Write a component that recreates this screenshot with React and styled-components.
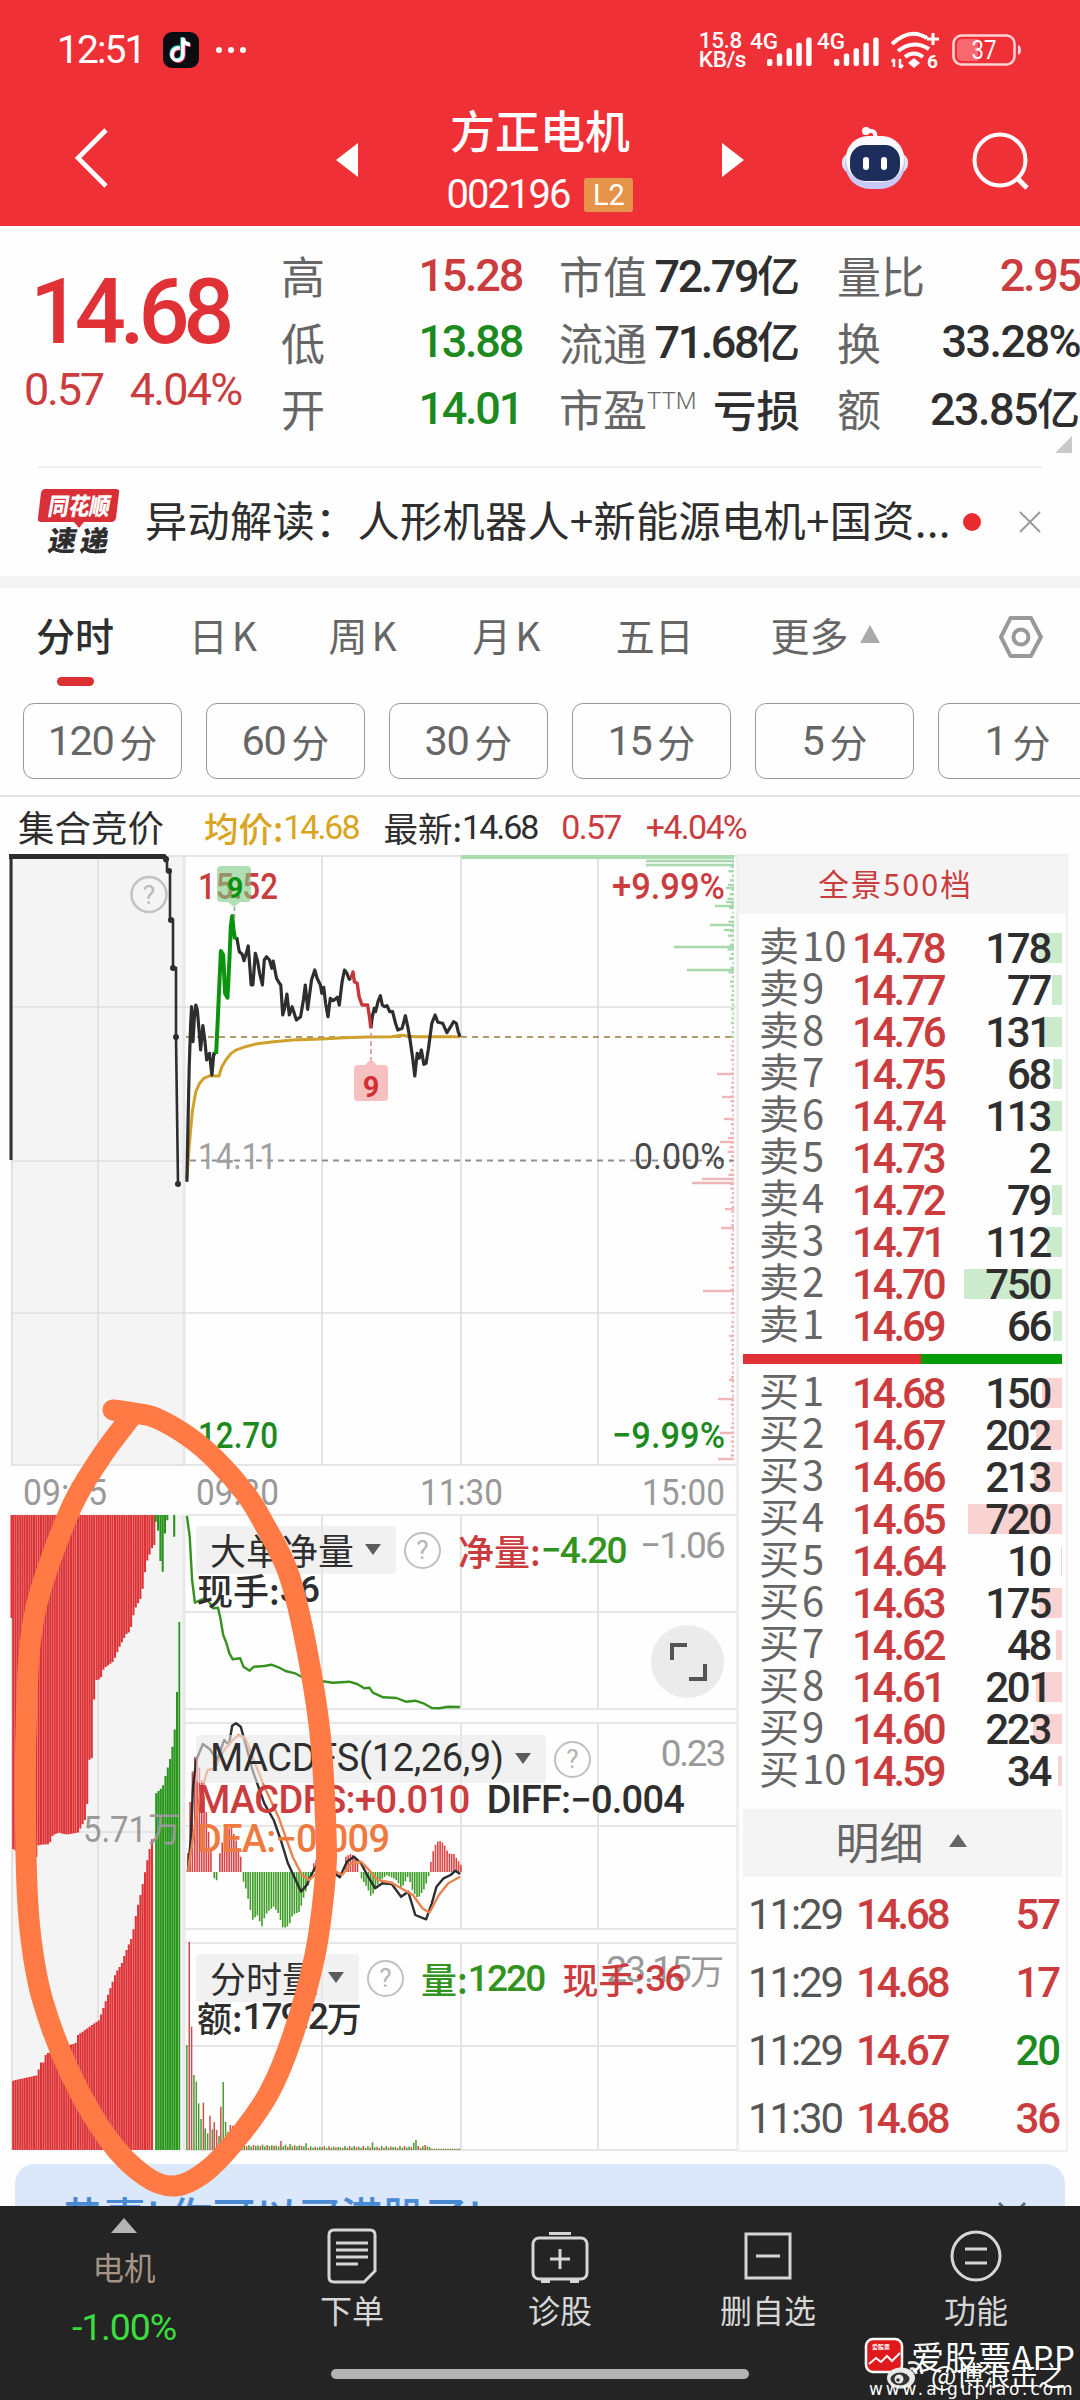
import React from "react";
import styled, { createGlobalStyle, css } from "styled-components";

const RED = "#e03236";
const RED2 = "#cb3c3f";
const GREEN = "#0b930f";
const INK = "#2e2e2e";
const GREY = "#666";
const MUTE = "#999";
const CJK = `"Noto Sans CJK SC", sans-serif`;
const NUM = `Roboto, "Noto Sans CJK SC", sans-serif`;

const Global = createGlobalStyle`
  body { margin: 0; background: #fff; }
  * { box-sizing: border-box; }
`;

const Screen = styled.div`
  width: 1080px;
  height: 2400px;
  overflow: hidden;
  position: relative;
  display: flex;
  flex-direction: column;
  background: #fefefe;
  font-family: ${CJK};
  color: ${INK};
  white-space: nowrap;
`;

const Num = styled.span`
  font-family: ${NUM};
  font-size: ${(p) => p.$s || 42}px;
  font-weight: ${(p) => p.$w || 400};
  letter-spacing: ${(p) => (p.$ls === undefined ? -0.05 : p.$ls)}em;
  color: ${(p) => p.$c || "inherit"};
  line-height: 1;
`;
const Han = styled.span`
  font-family: ${CJK};
  font-size: ${(p) => p.$s || 42}px;
  font-weight: ${(p) => p.$w || 400};
  color: ${(p) => p.$c || "inherit"};
  letter-spacing: ${(p) => p.$ls || 0}px;
  line-height: 1;
`;

/* ---------- top bar ---------- */
const Top = styled.header`
  height: 226px;
  background: #f03037;
  color: #fff;
  flex: none;
`;
const Status = styled.div`
  height: 100px;
  padding: 0 58px 0 57px;
  display: flex;
  align-items: center;
  justify-content: space-between;
`;
const StatusSide = styled.div`
  display: flex;
  align-items: center;
  gap: ${(p) => p.$gap}px;
`;
const Speed = styled.div`
  display: flex;
  flex-direction: column;
  font: 500 22.5px/19.5px ${NUM};
  letter-spacing: -0.4px;
`;
const TitleBar = styled.div`
  height: 126px;
  display: grid;
  grid-template-columns: 336px 22px 364px 22px 97px 70px 1fr;
  align-items: center;
  padding-bottom: 6px;
`;
const Back = styled.div`
  padding-left: 74px;
`;
const Names = styled.div`
  display: flex;
  flex-direction: column;
  align-items: center;
  gap: 26px;
  padding-bottom: 2px;
`;
const Code = styled.div`
  display: flex;
  align-items: center;
  gap: 15px;
  height: 34px;
`;
const Level = styled.span`
  width: 49px;
  height: 34px;
  background: #e6944a;
  border-radius: 3px;
  display: grid;
  place-items: center;
  font: 400 29px/34px ${NUM};
`;

/* ---------- quote ---------- */
const Quote = styled.section`
  height: 240px;
  flex: none;
  display: grid;
  grid-template-columns: 281px 241px 37px 241px 37px 243px;
`;
const Last = styled.div`
  padding: 42px 0 0 30px;
  display: flex;
  flex-direction: column;
  gap: 9px;
  color: ${RED};
`;
const Change = styled.div`
  display: flex;
  gap: 27px;
  margin-left: -6px;
  color: ${RED2};
`;
const Facts = styled.div`
  padding-top: 16px;
  display: flex;
  flex-direction: column;
  grid-column: ${(p) => p.$col};
`;
const Fact = styled.div`
  height: 66.5px;
  display: flex;
  align-items: center;
  justify-content: space-between;
`;
const FactName = styled.span`
  font-size: 44px;
  line-height: 1;
  color: ${GREY};
  display: flex;
  small { font: 300 24px/24px ${NUM}; margin-top: 3px; }
`;
const Corner = styled.i`
  width: 0;
  height: 0;
  align-self: flex-end;
  margin: -6px 8px 0 0;
  border-left: 17px solid transparent;
  border-bottom: 17px solid #c9c9c9;
`;

const News = styled.section`
  height: 110px;
  flex: none;
  margin: 0 38px;
  border-top: 2px solid #efefef;
  display: grid;
  grid-template-columns: 82px 25px 1fr auto auto;
  align-items: center;
`;
const NewsText = styled.div`
  grid-column: 3;
  font-size: 42.2px;
  line-height: 60px;
  letter-spacing: 0.3px;
  padding-bottom: 6px;
`;
const Dot = styled.i`
  width: 18px;
  height: 18px;
  border-radius: 50%;
  background: #ea2b2e;
  margin: 0 37px 0 0;
`;
const Band = styled.div`
  height: 12px;
  flex: none;
  background: #f4f4f4;
`;

/* ---------- period tabs ---------- */
const Tabs = styled.nav`
  height: 115px;
  flex: none;
  display: flex;
  padding: 22px 36px 0;
`;
const Tab = styled.div`
  width: ${(p) => p.$w}px;
  font-size: 39px;
  line-height: 44px;
  letter-spacing: ${(p) => p.$ls || 0}px;
  display: flex;
  align-items: center;
  height: 48px;
  color: ${(p) => (p.$on ? INK : GREY)};
  font-weight: ${(p) => (p.$on ? 500 : 400)};
  position: relative;
  ${(p) => p.$on && css`
    &::after {
      content: "";
      position: absolute;
      left: 21px;
      top: 67px;
      width: 37px;
      height: 9px;
      border-radius: 5px;
      background: #dd3033;
    }
  `}
`;
const Up = styled.i`
  border: ${(p) => p.$w / 2}px solid transparent;
  border-top: 0;
  border-bottom: ${(p) => p.$h}px solid ${(p) => p.$c};
  width: 0;
  height: 0;
  margin-left: ${(p) => p.$ml || 0}px;
`;
const Down = styled.i`
  border: 8px solid transparent;
  border-bottom: 0;
  border-top: 11px solid #5c5c5c;
  width: 0;
  height: 0;
`;
const Minutes = styled.div`
  height: 94px;
  flex: none;
  display: flex;
  gap: 24px;
  padding-left: 23px;
  border-bottom: 2px solid #e2e2e2;
`;
const Minute = styled.div`
  flex: none;
  width: 159px;
  height: 76px;
  border: 1.5px solid #999;
  border-radius: 11px;
  display: flex;
  align-items: center;
  justify-content: center;
  gap: 6px;
  color: ${GREY};
`;
const Legend = styled.div`
  height: 57px;
  flex: none;
  display: flex;
  align-items: center;
  padding: 3px 0 0 18px;
`;
const Item = styled.span`
  display: flex;
  align-items: center;
  margin-left: ${(p) => p.$ml || 0}px;
  color: ${(p) => p.$c || "inherit"};
`;

/* ---------- body: charts + book ---------- */
const Body = styled.main`
  height: 1298px;
  flex: none;
  display: grid;
  grid-template-columns: 738px 330px;
`;
const Charts = styled.section`
  position: relative;
  height: 1298px;
`;
const Canvas = styled.svg`
  position: absolute;
  left: 0;
  top: 0;
`;
const Pane = styled.div`
  position: absolute;
  left: 196px;
  top: ${(p) => p.$top}px;
  width: 542px;
`;
const PaneHead = styled.div`
  height: 48px;
  display: flex;
  align-items: center;
`;
const Picker = styled.div`
  height: 48px;
  width: ${(p) => p.$w}px;
  padding: 0 15px 2px 14px;
  display: flex;
  align-items: center;
  justify-content: space-between;
  background: rgba(232, 232, 232, 0.6);
  border-radius: 4px;
`;
const Help = styled.span`
  flex: none;
  width: 37px;
  height: 37px;
  margin: 0 0 0 8px;
  border: 2.5px solid #c0c0c0;
  border-radius: 50%;
  display: grid;
  place-items: center;
  font: 400 26px/32px ${NUM};
  color: #b5b5b5;
`;
const PaneLine = styled.div`
  display: flex;
  align-items: center;
  height: ${(p) => p.$h || 30}px;
  padding-left: ${(p) => p.$pl || 1}px;
`;
const Scale = styled.div`
  position: absolute;
  right: 14px;
  top: ${(p) => p.$top}px;
  display: flex;
  align-items: center;
  color: ${MUTE};
`;
const Expand = styled.div`
  position: absolute;
  left: 651px;
  top: 771px;
  width: 73px;
  height: 73px;
  border-radius: 50%;
  background: #ebebeb;
  display: grid;
  place-items: center;
`;

const Book = styled.aside`
  height: 1298px;
  border: 2px solid #f0f0f0;
  border-left: 1px solid #eee;
  display: flex;
  flex-direction: column;
`;
const BookHead = styled.div`
  height: 58px;
  flex: none;
  background: #f4f4f4;
  color: ${RED2};
  display: flex;
  align-items: center;
  justify-content: center;
  font-size: 30.5px;
  letter-spacing: 2px;
  padding: 0 14px 4px 0;
`;
const Levels = styled.div`
  padding-top: ${(p) => p.$pt}px;
  flex: none;
`;
const LevelRow = styled.div`
  height: 42px;
  display: grid;
  grid-template-columns: 93px 1fr;
  padding: 0 4px 0 20px;
  align-items: center;
`;
const Side = styled.div`
  color: ${GREY};
  font-size: 40px;
  line-height: 42px;
  display: flex;
  gap: 3px;
  position: relative;
  top: -4px;
`;
const Cells = styled.div`
  display: flex;
  justify-content: space-between;
  align-items: center;
  height: 30px;
  padding: 2px 12px 0 0;
  background: linear-gradient(${(p) => p.$bar}, ${(p) => p.$bar}) right center / ${(p) => p.$len}px 30px no-repeat;
`;
const Ratio = styled.div`
  height: 10px;
  flex: none;
  margin: 7px 4px 7px 4px;
  display: grid;
  grid-template-columns: 178px 1fr;
  background: #049a08;
  &::before { content: ""; background: ${RED}; }
`;
const DetailHead = styled.div`
  height: 68px;
  flex: none;
  margin: 17px 4px 4px;
  background: #f4f4f4;
  color: ${GREY};
  display: flex;
  align-items: center;
  justify-content: center;
  gap: 25px;
  font-size: 44px;
  line-height: 60px;
  padding: 0 3px 5px 0;
`;
const Trade = styled.div`
  height: 68px;
  flex: none;
  display: grid;
  grid-template-columns: 108px 95px 1fr;
  align-items: center;
  padding: 0 7px 0 9px;
  & > :last-child { text-align: right; }
`;

/* ---------- bottom ---------- */
const Banner = styled.section`
  flex: none;
  height: 42px;
  margin: 12px 15px 0;
  background: #dae8fa;
  border-radius: 20px 20px 0 0;
  overflow: hidden;
  display: flex;
  justify-content: space-between;
  padding: 23px 38px 0 46px;
  color: #4a8ad4;
  font-weight: 500;
  font-size: 42.5px;
  line-height: 56px;
`;
const Dock = styled.footer`
  flex: 1;
  background: #242424;
  color: #d6d6d6;
  display: grid;
  grid-template-columns: 248px 208px 208px 208px 208px;
  grid-template-rows: 145px 1fr;
`;
const Sector = styled.div`
  display: flex;
  flex-direction: column;
  align-items: center;
  padding: 12px 0 0 0;
`;
const Action = styled.div`
  display: flex;
  flex-direction: column;
  align-items: center;
  padding-top: 20px;
  gap: 7px;
`;
const HomeBar = styled.div`
  grid-column: 1 / 6;
  justify-self: center;
  width: 418px;
  height: 10px;
  margin-top: 18px;
  border-radius: 5px;
  background: #b3b3b3;
`;
const Mark = styled.div`
  position: absolute;
  left: 864px;
  top: 2337px;
  width: 216px;
  height: 63px;
  color: #fff;
`;
const MarkLine = styled.div`
  position: absolute;
  left: ${(p) => p.$x}px;
  top: ${(p) => p.$y}px;
  font: ${(p) => p.$f};
  letter-spacing: ${(p) => p.$ls || 0}px;
`;
const Scribble = styled.svg`
  position: absolute;
  left: 0;
  top: 1380px;
  pointer-events: none;
`;

/* ---------- chart data ---------- */
const TOP = 854;
const KX = 2.119;
// Chart samples are stored on a 2.119 x 3 finer raster; yo is the raster's first line.
const toXY = (yo) => ([x, y]) => [x / KX, y / 3 + yo - TOP];
const line = (pts, yo) =>
  pts.map(toXY(yo)).map(([x, y], i) => `${i ? "L" : "M"}${x.toFixed(1)} ${y.toFixed(1)}`).join("");
const at = (pts, x) => {
  for (let i = 1; i < pts.length; i++) {
    const [a, b] = [pts[i - 1], pts[i]];
    if (x <= b[0]) return a[1] + ((b[1] - a[1]) * (x - a[0])) / (b[0] - a[0] || 1);
  }
  return pts[pts.length - 1][1];
};
const bars = (pts, step, yo, base) => {
  const out = [];
  for (let x = pts[0][0]; x <= pts[pts.length - 1][0]; x += step) {
    const y = at(pts, x) / 3 + yo - TOP;
    out.push(`M${(x / KX).toFixed(1)} ${base}V${y.toFixed(1)}`);
  }
  return out.join("");
};
const smooth = (p) => {
  let d = `M${p[0][0]} ${p[0][1]}`;
  for (let i = 0; i < p.length - 1; i++) {
    const a = p[Math.max(0, i - 1)], b = p[i], c = p[i + 1], e = p[Math.min(p.length - 1, i + 2)];
    d += `C${b[0] + (c[0] - a[0]) / 6} ${b[1] + (c[1] - a[1]) / 6} ${c[0] - (e[0] - b[0]) / 6} ${c[1] - (e[1] - b[1]) / 6} ${c[0]} ${c[1]}`;
  }
  return d;
};

const P1 = [[396, 995], [398, 850], [401, 650], [404, 520], [406, 470], [409, 575], [412, 500], [415, 465], [418, 480], [423, 560], [425, 600], [430, 527], [434, 570], [438, 630], [444, 610], [449, 675], [453, 610], [458, 612]];
const PG = [[458, 612], [461, 520], [465, 400], [468, 303], [473, 315], [477, 430], [482, 443], [486, 330], [489, 230], [492, 198], [495, 240], [498, 268]];
const P2 = [[498, 268], [502, 265], [507, 305], [513, 312], [517, 332], [522, 310], [526, 288], [530, 360], [532, 405], [536, 405], [541, 310], [546, 335], [550, 370], [556, 405], [560, 330], [565, 320], [571, 330], [576, 355], [579, 333], [586, 385], [592, 400], [595, 405], [599, 495], [603, 475], [608, 432], [613, 495], [619, 470], [628, 510], [637, 500], [643, 450], [647, 405], [652, 478], [660, 390], [667, 360], [672, 385], [679, 405], [682, 430], [686, 412], [690, 460], [695, 500], [700, 445], [706, 452], [715, 442], [719, 465], [725, 395], [730, 360], [735, 370], [740, 388], [744, 385]];
const PR = [[744, 385], [748, 366], [751, 395], [757, 400], [761, 440], [767, 465], [779, 465], [783, 500], [786, 535]];
const P3 = [[786, 535], [789, 500], [793, 475], [796, 485], [801, 455], [806, 437], [810, 465], [815, 470], [820, 467], [826, 485], [832, 485], [838, 520], [843, 540], [852, 535], [859, 497], [864, 530], [868, 560], [874, 620], [879, 678], [884, 610], [888, 625], [893, 600], [898, 643], [903, 640], [908, 595], [915, 520], [922, 495], [928, 517], [938, 520], [947, 548], [955, 530], [961, 515], [967, 520], [971, 545], [975, 560]];
const AVG = [[396, 985], [402, 870], [408, 780], [415, 725], [423, 700], [432, 685], [445, 677], [464, 678], [470, 650], [480, 627], [490, 610], [500, 600], [520, 590], [545, 581], [580, 575], [620, 570], [680, 567], [730, 563], [780, 561], [830, 560], [850, 556], [880, 560], [975, 560]];
const NET = [[396, 48], [402, 110], [407, 240], [413, 308], [425, 300], [435, 295], [445, 310], [452, 325], [462, 323], [467, 355], [473, 405], [480, 430], [486, 460], [493, 478], [509, 475], [516, 500], [529, 512], [538, 500], [560, 498], [575, 494], [590, 502], [605, 513], [625, 520], [645, 535], [680, 543], [705, 548], [740, 545], [757, 552], [772, 565], [783, 563], [790, 578], [812, 592], [840, 594], [860, 605], [880, 602], [897, 610], [915, 624], [930, 625], [950, 620], [975, 621]];
const DIFF = [[398, 155], [404, 60], [409, -100], [416, -180], [430, -228], [445, -212], [460, -180], [475, -240], [485, -225], [492, -283], [500, -290], [510, -280], [520, -230], [535, -150], [545, -110], [560, -50], [580, 0], [595, 60], [610, 130], [638, 215], [650, 195], [665, 150], [680, 120], [700, 150], [720, 172], [735, 125], [750, 110], [765, 130], [780, 170], [795, 205], [810, 190], [830, 192], [850, 230], [865, 215], [880, 285], [903, 298], [915, 250], [925, 200], [940, 175], [955, 165], [965, 152], [975, 162]];
const DEA = [[398, 155], [415, 0], [425, -80], [440, -150], [455, -155], [475, -210], [490, -235], [505, -255], [520, -245], [535, -190], [560, -100], [590, -10], [620, 110], [640, 165], [655, 180], [675, 155], [700, 145], [725, 165], [745, 130], [765, 125], [785, 155], [800, 180], [830, 188], [850, 205], [875, 225], [895, 265], [910, 278], [930, 225], [950, 190], [975, 170]];
const HIST_R = [
  [[398, 100], [405, -120], [415, -210], [425, -140], [435, -50], [445, 70], [451, 140]],
  [[466, 100], [475, 40], [490, 20], [500, 60], [511, 115]],
  [[665, 130], [680, 100], [700, 130], [712, 150]],
  [[733, 110], [745, 100], [755, 120], [762, 148]],
  [[913, 125], [920, 80], [930, 60], [940, 70], [950, 100], [962, 102], [970, 120], [977, 135]],
];
const HIST_G = [
  [[454, 175], [460, 182]],
  [[516, 185], [522, 210], [535, 300], [545, 285], [555, 320], [562, 285], [570, 272], [580, 260], [590, 280], [600, 325], [612, 318], [620, 285], [635, 275], [645, 225], [655, 190], [661, 165]],
  [[766, 175], [777, 200], [787, 232], [797, 200], [807, 180], [820, 165], [840, 180], [851, 205], [865, 168], [875, 215], [886, 235], [900, 205], [910, 160]],
];
const DROP_R = [[28, 1048], [76, 1078], [82, 1035], [105, 1032], [112, 1005], [125, 998], [140, 1004], [165, 998], [180, 960], [186, 900], [189, 780], [198, 770], [200, 541], [213, 537], [220, 505], [240, 485], [255, 435], [268, 402], [276, 395], [285, 330], [300, 290], [310, 190], [322, 145], [327, 135]];
const DROP_G = [[330, 65], [334, 60], [336, 130], [341, 200], [343, 130], [347, 330], [350, 65], [355, 60], [358, 45], [366, 45], [369, 115], [372, 45], [380, 45]];
const RISE_R = [[28, 782], [50, 775], [81, 765], [83, 728], [95, 727], [97, 700], [128, 695], [131, 680], [160, 670], [165, 645], [190, 620], [210, 600], [220, 560], [235, 500], [245, 460], [258, 430], [265, 400], [280, 350], [290, 270], [300, 210], [315, 100], [325, 40]];
const RISE_G = [[331, -80], [345, -100], [352, -140], [360, -180], [368, -240], [374, -325], [379, -595]];
const VOL = [[396, 675, 1], [401, 365, 0], [406, 620, 0], [411, 765, 1], [416, 785, 1], [421, 850, 1], [426, 897, 1], [431, 848, 0], [435, 925, 1], [440, 940, 1], [445, 887, 0], [450, 928, 1], [454, 906, 0], [459, 930, 0], [464, 948, 1], [468, 860, 0], [473, 786, 1], [478, 905, 1], [483, 935, 1], [488, 915, 0], [493, 917, 0], [498, 935, 0], [503, 962, 0]];
const TAIL = "6354738564938475637492837465392837465928374652938475629384756293847562938475629384756";
for (let i = 0; i < 97; i++) {
  const x = 508 + i * 4.85;
  const spike = { 18: 27, 22: 18, 29: 20, 50: 12, 58: 23, 72: 12, 76: 22, 77: 30, 81: 15 }[i];
  const h = spike || (i < 30 ? 8 : 4) + Number(TAIL[i % TAIL.length]) * (i > 83 ? 0 : 0.9);
  VOL.push([x, 990 - h, (i * 7) % 3 === 0 ? 0 : 1]);
}
const DEPTH = [];
for (let i = 0; i < 130; i++) {
  const y = 862 + i * 4.6;
  const lean = y < 985 || (y > 1130 && y < 1185) ? 5 : 2;
  DEPTH.push([734 - 1.5 - (((i * 37) % 11) / 10) * lean, y]);
}
const DEPTH_BIG = [[646, 861], [646, 865], [715, 906], [710, 925], [674, 947], [687, 970], [724, 930], [726, 902], [726, 888], [717, 1074], [722, 1097], [724, 1119], [720, 1142], [702, 1179], [692, 1183], [725, 1209], [721, 1228], [703, 1291], [729, 1268], [718, 1399], [720, 1433], [718, 1459], [729, 1380], [729, 1336]];

const LASSO = [[113, 1410], [134, 1413], [156, 1418], [189, 1437], [217, 1461], [245, 1493], [262, 1520], [288, 1572], [305, 1640], [320, 1733], [326, 1833], [325, 1880], [315, 1955], [293, 2035], [269, 2093], [236, 2140], [205, 2172], [175, 2186], [145, 2176], [109, 2140], [71, 2075], [42, 1998], [30, 1930], [26, 1853], [26, 1733], [34, 1617], [68, 1515], [99, 1460], [130, 1418]];

const Grid = () => {
  const v = [322, 461, 598];
  const panes = [[1515, 1612, 1709], [1723, 1826, 1929], [1943, 2046, 2150]];
  return (
    <g stroke="#dedede" strokeWidth="1.6" fill="none">
      <rect x="11" y="2" width="173" height="1294" fill="#f4f4f4" stroke="none" />
      <rect x="10" y={1466 - TOP} width="177" height="48" fill="#fefefe" stroke="none" />
      <path d={`M12 2V${1465 - TOP}M98 2V${1465 - TOP}M12 ${1515 - TOP}V1296M98 ${1515 - TOP}V1296M12 ${1832 - TOP}H184`} />
      <path d={`M184 2V${1465 - TOP}M184 ${1515 - TOP}V1296`} strokeWidth="3" stroke="#e8e8e8" />
      <path d={`M11 2H738M11 153H738M11 307H184M11 459H738M11 611H738`} />
      {v.map((x) => (
        <path key={x} d={`M${x} 2V611` + panes.map(([a, , c]) => `M${x} ${a - TOP}V${c - TOP}`).join("")} />
      ))}
      <path d={panes.flat().map((y) => `M185 ${y - TOP}H738`).join("")} strokeWidth="2" stroke="#e6e6e6" />
      <path d="M737 2V1296" stroke="#ececec" />
    </g>
  );
};

const Label = ({ x, y, w, c, s = 37, children, b }) => (
  <text x={x} y={y - TOP} textLength={w} lengthAdjust="spacingAndGlyphs" fill={c} fontSize={s} fontWeight={b || 400} fontFamily="Roboto, 'Noto Sans CJK SC', sans-serif">
    {children}
  </text>
);

const Plot = () => (
  <Canvas width="738" height="1298" fill="none">
    <Grid />
    {/* order depth along the right edge */}
    <path d="M461 3H734" stroke="#a9dcae" strokeWidth="4" />
    <g strokeWidth="2.4">
      {[...DEPTH, ...DEPTH_BIG].map(([x, y], i) => (
        <path key={i} d={`M${x} ${y - TOP}H734`} stroke={y < 1037 ? "#a9d8ad" : "#efb5b7"} />
      ))}
    </g>
    <path d={`M186 ${1037 - TOP}H734`} stroke="#b09a6c" strokeWidth="1.8" strokeDasharray="6 5" />
    <path d={`M190 ${1160.5 - TOP}H734`} stroke="#8f8f8f" strokeWidth="2" strokeDasharray="6 5" />
    {/* call auction */}
    <path d="M11 2V306" stroke={INK} strokeWidth="3" />
    <path d="M9 2.5H164l3 5" stroke={INK} strokeWidth="5" />
    <path d="M167 6V17H170V66H173V114H176V183L178 330" stroke={INK} strokeWidth="2.6" />
    <g fill={INK}>
      {[[166, 5], [169, 17], [171, 66], [173, 114], [176, 183], [178, 330]].map(([x, y]) => (
        <circle key={y} cx={x} cy={y} r="3" />
      ))}
    </g>
    <circle cx="149" cy={894.5 - TOP} r="17.5" stroke="#c2c2c2" strokeWidth="2.5" />
    <text x="149" y={904 - TOP} textAnchor="middle" fontSize="26" fill="#bababa" fontFamily="Roboto">?</text>
    {/* intraday price */}
    <Label x="634" y={1169} w="91" c="#4a4a4a">0.00%</Label>
    <Label x="198" y={1169} w="79" c="#a0a0a0">14.11</Label>
    <path d={line(AVG, 850)} stroke="#cfa12c" strokeWidth="3" />
    <g strokeWidth="3.2" strokeLinejoin="round">
      <path d={line(P1, 850)} stroke={INK} />
      <path d={line(P2, 850)} stroke={INK} />
      <path d={line(P3, 850)} stroke={INK} />
      <path d={line(PR, 850)} stroke="#c9363a" strokeWidth="3.4" />
      <path d={line(PG, 850)} stroke={GREEN} strokeWidth="4" />
    </g>
    <Label x="198" y={899} w="80" c={RED2} b="500">15.52</Label>
    <path d="M221 12h26q4 0 4 4v28q0 4-4 4h-7l-6 5-6-5h-7q-4 0-4-4V16q0-4 4-4z" fill="#79c981" fillOpacity=".6" />
    <text x="235" y={898 - TOP} textAnchor="middle" fontSize="29" fontWeight="700" fill={GREEN} fontFamily="Roboto">9</text>
    <path d="M234.500 53V64" stroke="#8aa88c" strokeWidth="1.5" strokeDasharray="4 3" />
    <path d="M371 179V206" stroke="#d98f92" strokeWidth="1.6" strokeDasharray="5 3" />
    <path d="M358 211h7l6-6 6 6h7q4 0 4 4v28q0 4-4 4h-26q-4 0-4-4v-28q0-4 4-4z" fill="#f6bfc0" />
    <text x="371" y={1097 - TOP} textAnchor="middle" fontSize="29" fontWeight="700" fill="#d02f33" fontFamily="Roboto">9</text>
    <Label x="612" y={899} w="113" c={RED2} b="500">+9.99%</Label>
    <Label x="198" y={1448} w="80" c="#1c8a1e" b="500">12.70</Label>
    <Label x="612" y={1448} w="113" c="#1c8a1e" b="500">−9.99%</Label>
    <Label x="23" y={1505} w="84" c={MUTE}>09:15</Label>
    <Label x="196" y={1505} w="83" c={MUTE}>09:30</Label>
    <Label x="420" y={1505} w="83" c={MUTE}>11:30</Label>
    <Label x="642" y={1505} w="83" c={MUTE}>15:00</Label>
    {/* auction volumes */}
    <path d={`M11.500 ${1515 - TOP}V${1618 - TOP}`} stroke={RED} strokeWidth="2" />
    <g strokeWidth="2.050">
      <path d={bars(DROP_R, 4.9, 1500, 1515 - TOP)} stroke="#de3336" />
      <path d={bars(DROP_G, 4.9, 1500, 1515 - TOP)} stroke="#27921c" />
      <path d={bars(RISE_R, 4.9, 1820, 1296)} stroke="#de3336" />
      <path d={bars(RISE_G, 4.9, 1820, 1296)} stroke="#27961a" />
    </g>
    <path d={`M179.300 ${1622 - TOP}V1296`} stroke="#27961a" strokeWidth="1.8" />
    <Label x="83" y={1842} w="64" c={MUTE}>5.71</Label>
    <Label x="148" y={1842} w="33" c={MUTE} s="35">万</Label>
    {/* net large orders */}
    <path d={line(NET, 1500)} stroke="#35921f" strokeWidth="2.4" strokeLinejoin="round" />
    {/* MACD */}
    <g strokeWidth="1.600">
      {HIST_R.map((p, i) => <path key={i} d={bars(p, 4.9, 1820, 1872 - TOP)} stroke="#db4446" />)}
      {HIST_G.map((p, i) => <path key={i} d={bars(p, 4.9, 1820, 1872 - TOP)} stroke="#3d9c26" />)}
    </g>
    <path d={line(DIFF, 1820)} stroke={INK} strokeWidth="2.4" strokeLinejoin="round" />
    <path d={line(DEA, 1820)} stroke="#e8834f" strokeWidth="2.4" strokeLinejoin="round" />
    {/* volume */}
    <g strokeWidth="1.500">
      {VOL.map(([x, y, up], i) => (
        <path key={i} d={`M${x / KX} 1296V${y / 3 + 1820 - TOP}`} stroke={up ? "#4c9a35" : "#cf4d4d"} />
      ))}
    </g>
  </Canvas>
);

const sells = [["10", "14.78", 178], ["9", "14.77", 77], ["8", "14.76", 131], ["7", "14.75", 68], ["6", "14.74", 113], ["5", "14.73", 2], ["4", "14.72", 79], ["3", "14.71", 112], ["2", "14.70", 750], ["1", "14.69", 66]];
const buys = [["1", "14.68", 150], ["2", "14.67", 202], ["3", "14.66", 213], ["4", "14.65", 720], ["5", "14.64", 10], ["6", "14.63", 175], ["7", "14.62", 48], ["8", "14.61", 201], ["9", "14.60", 223], ["10", "14.59", 34]];
const trades = [["11:29", "14.68", 57], ["11:29", "14.68", 17], ["11:29", "14.67", 20, 1], ["11:30", "14.68", 36]];

const Rows = ({ side, rows, bar, pt }) => (
  <Levels $pt={pt}>
    {rows.map(([n, price, qty]) => (
      <LevelRow key={n}>
        <Side><span>{side}</span><span>{n}</span></Side>
        <Cells $bar={bar} $len={qty < 5 ? 0 : Math.round((qty * 98) / 750)}>
          <Num $w={500} $ls={-0.075} $c={RED2}>{price}</Num>
          <Num $w={500} $ls={-0.055}>{qty}</Num>
        </Cells>
      </LevelRow>
    ))}
  </Levels>
);

const Signal = () => (
  <svg width="63" height="38" viewBox="0 0 63 38" fill="#fff">
    <text x="0" y="17.500" textLength="28" lengthAdjust="spacingAndGlyphs" fontSize="21.500" fontWeight="500" fontFamily="Roboto">4G</text>
    {[0, 1, 2, 3, 4].map((i) => (
      <rect key={i} x={17 + i * 9.8} y={28 - i * 5.4} width="5.400" height={7 + i * 5.4} rx="2" />
    ))}
  </svg>
);

export default function App() {
  return (
    <Screen>
      <Global />
      <Top>
        <Status>
          <StatusSide $gap={19}>
            <Num $s={39}>12:51</Num>
            <svg width="36" height="36" viewBox="0 0 36 36">
              <rect width="36" height="36" rx="9" fill="#0b0b12" />
              <g fill="none" strokeWidth="3.600">
                <path d="M17 16c-5-.5-8 2.500-8 6.500s3 6 5.500 6 5.500-2 5.500-6V6c.5 4 3 6.500 7 6.500" stroke="#25e6e0" transform="translate(-.8 -.8)" />
                <path d="M17 16c-5-.5-8 2.500-8 6.500s3 6 5.500 6 5.500-2 5.500-6V6c.5 4 3 6.500 7 6.500" stroke="#f0305a" transform="translate(.9 .8)" />
                <path d="M17 16c-5-.5-8 2.500-8 6.500s3 6 5.500 6 5.500-2 5.500-6V6c.5 4 3 6.500 7 6.500" stroke="#fff" />
              </g>
            </svg>
            <svg width="34" height="8" fill="#fff" style={{ marginLeft: -3 }}><circle cx="4" cy="4" r="3" /><circle cx="16" cy="4" r="3" /><circle cx="28" cy="4" r="3" /></svg>
          </StatusSide>
          <StatusSide $gap={4}>
            <Speed><span>15.8</span><span>KB/s</span></Speed>
            <Signal />
            <Signal />
            <svg width="50" height="38" viewBox="0 0 50 38" fill="none" stroke="#fff" strokeWidth="4" style={{ marginLeft: 7 }}>
              <path d="M1 13Q19-4 36 7M7 20Q22 8 38 18M14 26Q23 19 32 26" />
              <path d="M23 27l6 5-6 5-6-5z" fill="#fff" stroke="none" />
              <path d="M36 8H48M42 2V14" strokeWidth="3" />
              <path d="M3 28V36M9 28V37M1 31l2-3M9 37l3-3" strokeWidth="2.500" />
              <text x="36" y="37" fontSize="19" fontWeight="700" fill="#fff" stroke="none" fontFamily="Roboto">6</text>
            </svg>
            <svg width="70" height="32" viewBox="0 0 70 32" style={{ marginLeft: 7 }}>
              <rect x="1.500" y="1.500" width="61" height="29" rx="8" fill="none" stroke="#fbd3d3" strokeWidth="2.600" />
              <path d="M11 5H26V27H11Q5 27 5 22V10Q5 5 11 5z" fill="#f7696e" />
              <path d="M66 11Q69 12 69 16T66 21z" fill="#fbd3d3" />
              <text x="32" y="25" textAnchor="middle" textLength="25" lengthAdjust="spacingAndGlyphs" fontSize="25" fill="#fff" fontFamily="Roboto">37</text>
            </svg>
          </StatusSide>
        </Status>
        <TitleBar>
          <Back>
            <svg width="36" height="60" viewBox="0 0 36 60" fill="none" stroke="#fff" strokeWidth="4.600"><path d="M32 2L4 30L32 58" /></svg>
          </Back>
          <svg width="22" height="34"><path d="M22 0V34L0 17z" fill="#fff" /></svg>
          <Names>
            <Han $s={45} $w={500}>方正电机</Han>
            <Code><Num $s={40}>002196</Num><Level>L2</Level></Code>
          </Names>
          <svg width="22" height="34"><path d="M0 0V34L22 17z" fill="#fff" /></svg>
          <span />
          <svg width="68" height="66" viewBox="0 0 68 66">
            <path d="M26 4Q36 2 34 12" fill="none" stroke="#fff" strokeWidth="4" />
            <circle cx="25" cy="4" r="4" fill="#fff" />
            <rect x="1" y="26" width="66" height="20" rx="9" fill="#e4e4fb" />
            <rect x="4" y="10" width="60" height="52" rx="25" fill="#c9cafa" />
            <rect x="5" y="9" width="58" height="46" rx="22" fill="#fafaff" />
            <rect x="9" y="18" width="50" height="36" rx="15" fill="#1d2e5c" />
            <rect x="22" y="30" width="6" height="13" rx="3" fill="#fff" />
            <rect x="40" y="30" width="6" height="13" rx="3" fill="#fff" />
          </svg>
          <svg width="80" height="60" viewBox="0 0 80 60" fill="none" stroke="#fff" strokeWidth="4" style={{ marginLeft: 44 }}>
            <circle cx="45" cy="30" r="25.500" /><path d="M62 48L72 58" strokeWidth="5" />
          </svg>
        </TitleBar>
      </Top>

      <Quote>
        <Last>
          <Num $s={90} $w={500} $ls={-0.07}>14.68</Num>
          <Change><Num $s={45}>0.57</Num><Num $s={45} $ls={-0.04}>4.04%</Num></Change>
        </Last>
        <Facts $col={2}>
          <Fact><FactName>高</FactName><Num $s={45} $w={500} $c={RED2}>15.28</Num></Fact>
          <Fact><FactName>低</FactName><Num $s={45} $w={500} $c="#1c8a1e">13.88</Num></Fact>
          <Fact><FactName>开</FactName><Num $s={45} $w={500} $c="#1c8a1e">14.01</Num></Fact>
        </Facts>
        <Facts $col={4}>
          <Fact><FactName>市值</FactName><span><Num $s={45} $w={500} $ls={-0.055}>72.79</Num><Han $s={43} $w={500}>亿</Han></span></Fact>
          <Fact><FactName>流通</FactName><span><Num $s={45} $w={500} $ls={-0.055}>71.68</Num><Han $s={43} $w={500}>亿</Han></span></Fact>
          <Fact><FactName>市盈<small>TTM</small></FactName><Han $s={43.5} $w={500}>亏损</Han></Fact>
        </Facts>
        <Facts $col={6}>
          <Fact><FactName>量比</FactName><Num $s={45} $w={500} $c={RED2}>2.95</Num></Fact>
          <Fact><FactName>换</FactName><Num $s={45} $w={500} $ls={-0.035}>33.28%</Num></Fact>
          <Fact><FactName>额</FactName><span><Num $s={45} $w={500} $ls={-0.035}>23.85</Num><Han $s={43} $w={500}>亿</Han></span></Fact>
          <Corner />
        </Facts>
      </Quote>

      <News>
        <svg width="82" height="68" viewBox="0 0 82 68">
          <path d="M7 1H78Q82 1 81 5L78 30Q77 34 73 34H46L41 40L36 34H3Q-1 34 0 30L3 5Q4 1 7 1z" fill="#d92f36" />
          <text transform="translate(9 27) skewX(-10)" textLength="62" lengthAdjust="spacingAndGlyphs" fontSize="24" fontWeight="900" fill="#fff" fontFamily="Noto Sans CJK SC">同花顺</text>
          <text transform="translate(9 63) skewX(-10)" textLength="60" fontSize="28" fontWeight="900" fill={INK} fontFamily="Noto Sans CJK SC">速递</text>
        </svg>
        <NewsText>异动解读：人形机器人+新能源电机+国资...</NewsText>
        <Dot />
        <svg width="24" height="24" viewBox="0 0 24 24" stroke="#9a9a9a" strokeWidth="2"><path d="M2 2L22 22M22 2L2 22" /></svg>
      </News>
      <Band />

      <Tabs>
        <Tab $w={153} $on>分时</Tab>
        <Tab $w={140} $ls={4}>日K</Tab>
        <Tab $w={144} $ls={4}>周K</Tab>
        <Tab $w={144} $ls={4}>月K</Tab>
        <Tab $w={155}>五日</Tab>
        <Tab $w={228}>更多<Up $w={20} $h={18} $c="#aaa" $ml={11} /></Tab>
        <svg width="46" height="46" viewBox="0 0 46 46" fill="none" stroke="#999" strokeWidth="4" strokeLinejoin="round" style={{ marginTop: 4 }}>
          <path d="M12.500 4H33L43 23L33 42H12.500L3 23z" /><circle cx="23" cy="23" r="7.500" />
        </svg>
      </Tabs>
      <Minutes>
        {["120", "60", "30", "15", "5", "1"].map((m) => (
          <Minute key={m}><Num $s={41.5} $ls={-0.035}>{m}</Num><Han $s={38}>分</Han></Minute>
        ))}
      </Minutes>
      <Legend>
        <Han $s={36.5}>集合竞价</Han>
        <Item $ml={40} $c="#d9a420"><Han $s={34.500} $w={500}>均价:</Han><Num $s={34} $ls={-0.06}>14.68</Num></Item>
        <Item $ml={25}><Han $s={34.500}>最新:</Han><Num $s={34} $ls={-0.06}>14.68</Num></Item>
        <Item $ml={24} $c={RED2}><Num $s={34}>0.57</Num></Item>
        <Item $ml={25} $c={RED2}><Num $s={34}>+4.04%</Num></Item>
      </Legend>

      <Body>
        <Charts>
          <Plot />
          <Scale $top={673}><Num $s={37}>−1.06</Num></Scale>
          <Pane $top={1526 - TOP}>
            <PaneHead>
              <Picker $w={200}><Han $s={36}>大单净量</Han><Down /></Picker>
              <Help>?</Help>
              <Item $ml={17} $c={RED2}><Han $s={36} $w={500}>净量:</Han></Item>
              <Num $s={37} $w={500} $c="#32941f">−4.20</Num>
            </PaneHead>
            <PaneLine><Han $s={36} $w={500}>现手:</Han><Num $s={37} $w={500}>36</Num></PaneLine>
          </Pane>
          <Expand>
            <svg width="38" height="38" viewBox="0 0 38 38" fill="none" stroke="#555" strokeWidth="4"><path d="M18 2H3V17M20 36H36V21" /></svg>
          </Expand>
          <Scale $top={881}><Num $s={37} $ls={-0.06}>0.23</Num></Scale>
          <Pane $top={1735 - TOP}>
            <PaneHead>
              <Picker $w={350}><Num $s={38} $ls={-0.01}>MACDFS(12,26,9)</Num><Down /></Picker>
              <Help>?</Help>
            </PaneHead>
            <PaneLine $h={33}>
              <Num $s={38} $w={500} $ls={-0.015} $c={RED2}>MACDFS:+0.010</Num>
              <Item $ml={17}><Num $s={38} $w={500} $ls={-0.02}>DIFF:−0.004</Num></Item>
            </PaneLine>
            <PaneLine $h={45}><Num $s={38} $w={500} $ls={-0.02} $c="#ef7a41">DEA:−0.009</Num></PaneLine>
          </Pane>
          <Scale $top={1097}><Num $s={37}>23.15</Num><Han $s={34}>万</Han></Scale>
          <Pane $top={1954 - TOP}>
            <PaneHead>
              <Picker $w={163}><Han $s={36}>分时量</Han><Down /></Picker>
              <Help>?</Help>
              <Item $ml={17} $c="#32941f"><Han $s={36} $w={500}>量:</Han><Num $s={37} $w={500}>1220</Num></Item>
              <Item $ml={18} $c={RED2}><Han $s={36} $w={500}>现手:</Han><Num $s={37} $w={500}>36</Num></Item>
            </PaneHead>
            <PaneLine $h={29}><Han $s={35} $w={500}>额:</Han><Num $s={37} $w={500} $ls={-0.055}>179.2</Num><Han $s={35} $w={500}>万</Han></PaneLine>
          </Pane>
        </Charts>

        <Book>
          <BookHead>全景500档</BookHead>
          <Rows side="卖" rows={sells} bar="#cceacc" pt={13} />
          <Ratio />
          <Rows side="买" rows={buys} bar="#f9d2d2" pt={1} />
          <DetailHead>明细<Up $w={18} $h={13} $c="#666" /></DetailHead>
          {trades.map(([t, price, qty, down], i) => (
            <Trade key={i}>
              <Num $c="#555" $ls={-0.05}>{t}</Num>
              <Num $w={500} $ls={-0.075} $c={RED2}>{price}</Num>
              <Num $w={500} $c={down ? "#1c8a1e" : RED2}>{qty}</Num>
            </Trade>
          ))}
        </Book>
      </Body>

      <Banner>
        <span>恭喜! 你可以买港股了!</span>
        <svg width="30" height="30" viewBox="0 0 30 30" stroke="#5a6c84" strokeWidth="3"><path d="M2 16L28 42M28 16L2 42" /></svg>
      </Banner>

      <Dock>
        <Sector>
          <Up $w={26} $h={15} $c="#b5b5b5" />
          <Han $s={31.5} $c="#a49484" style={{ marginTop: 18 }}>电机</Han>
          <Num $s={37.5} $c="#3ade3c" $ls={-0.03} style={{ marginTop: 26 }}>-1.00%</Num>
        </Sector>
        <Action>
          <svg width="60" height="60" viewBox="0 0 60 60" fill="none" stroke="#d6d6d6" strokeWidth="3">
            <path d="M12 4H48Q53 4 53 9V45L42 56H12Q7 56 7 51V9Q7 4 12 4z" /><path d="M14 17H46M14 24H46M14 31H46M14 38H36" />
          </svg>
          <Han $s={32}>下单</Han>
        </Action>
        <Action>
          <svg width="60" height="60" viewBox="0 0 60 60" fill="none" stroke="#d6d6d6" strokeWidth="3">
            <rect x="3" y="12" width="54" height="41" rx="6" /><path d="M19 7.500H41M30 23V43M20 33H40M11 55.500H20M40 55.500H49" />
          </svg>
          <Han $s={32}>诊股</Han>
        </Action>
        <Action>
          <svg width="60" height="60" viewBox="0 0 60 60" fill="none" stroke="#d6d6d6" strokeWidth="3">
            <rect x="8" y="8" width="44" height="44" /><path d="M18 30H42" />
          </svg>
          <Han $s={32}>删自选</Han>
        </Action>
        <Action>
          <svg width="60" height="60" viewBox="0 0 60 60" fill="none" stroke="#d6d6d6" strokeWidth="3">
            <circle cx="30" cy="30" r="24" /><path d="M19 23H41M19 37H41" />
          </svg>
          <Han $s={32}>功能</Han>
        </Action>
        <HomeBar />
      </Dock>

      <Scribble width="360" height="830" viewBox="0 1380 360 830" fill="none" stroke="#ff7a44" strokeWidth="21" strokeLinecap="round">
        <path d={smooth(LASSO)} />
      </Scribble>

      <Mark>
        <svg width="216" height="63" viewBox="0 0 216 63" style={{ position: "absolute" }}>
          <rect x="2" y="2" width="36" height="33" rx="7" fill="#e0191d" stroke="#fff" strokeWidth="2.500" />
          <path d="M5 27L12 21L17 25L23 19L28 24L36 16" fill="none" stroke="#fff" strokeWidth="2" />
          <text x="8" y="12" fontSize="6" fontWeight="700" fill="#fff" fontFamily="Noto Sans CJK SC">爱股票</text>
          <ellipse cx="37" cy="41" rx="14" ry="10.500" fill="#e9e9e9" />
          <ellipse cx="36" cy="42" rx="9.500" ry="6.500" fill="#333" />
          <circle cx="35" cy="42" r="4.500" fill="#e9e9e9" />
          <circle cx="34" cy="43" r="1.800" fill="#333" />
          <path d="M46 32q6-2 6 5M44 26q13-3 14 11" fill="none" stroke="#e9e9e9" strokeWidth="2.800" />
        </svg>
        <MarkLine $x={47} $y={2} $f={`400 33px/34px ${CJK}`} $ls={0.6}>爱股票APP</MarkLine>
        <MarkLine $x={67} $y={21} $f={`400 27px/34px ${CJK}`}>@博浪击之</MarkLine>
        <MarkLine $x={5} $y={42} $f={`400 17px/20px "DejaVu Sans", sans-serif`} $ls={2.9}>www.aigupiao.com</MarkLine>
      </Mark>
    </Screen>
  );
}
